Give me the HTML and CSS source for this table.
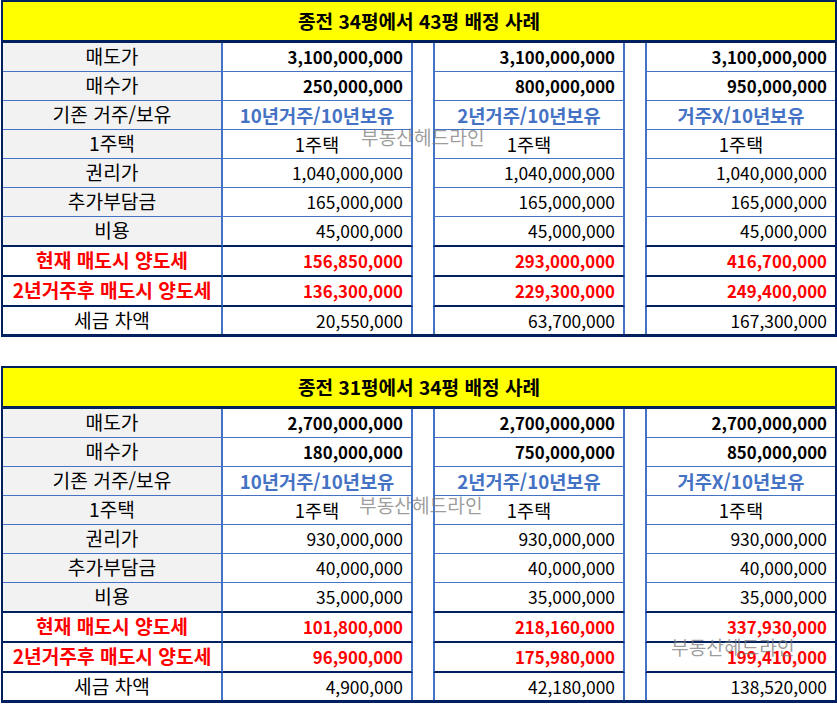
FILE: index.html
```html
<!DOCTYPE html>
<html lang="ko">
<head>
<meta charset="utf-8">
<title>배정 사례</title>
<link rel="stylesheet" href="styles.css">
</head>
<body>
<div class="page">
  <section class="sheet">
    <div class="title">종전 34평에서 43평 배정 사례</div>
    <div class="grid">
      <div class="gap gap-a"></div>
      <div class="gap gap-b"></div>

      <div class="lbl">매도가</div>
      <div class="val num c1 bold">3,100,000,000</div>
      <div class="val num c2 bold">3,100,000,000</div>
      <div class="val num c3 bold">3,100,000,000</div>

      <div class="lbl">매수가</div>
      <div class="val num c1 bold">250,000,000</div>
      <div class="val num c2 bold">800,000,000</div>
      <div class="val num c3 bold">950,000,000</div>

      <div class="lbl">기존 거주/보유</div>
      <div class="val mix c1 center blue bold">10년거주/10년보유</div>
      <div class="val mix c2 center blue bold">2년거주/10년보유</div>
      <div class="val mix c3 center blue bold">거주X/10년보유</div>

      <div class="lbl">1주택</div>
      <div class="val one c1 center">1주택</div>
      <div class="val one c2 center">1주택</div>
      <div class="val one c3 center">1주택</div>

      <div class="lbl">권리가</div>
      <div class="val num c1">1,040,000,000</div>
      <div class="val num c2">1,040,000,000</div>
      <div class="val num c3">1,040,000,000</div>

      <div class="lbl">추가부담금</div>
      <div class="val num c1">165,000,000</div>
      <div class="val num c2">165,000,000</div>
      <div class="val num c3">165,000,000</div>

      <div class="lbl dk">비용</div>
      <div class="val num c1 dk">45,000,000</div>
      <div class="val num c2 dk">45,000,000</div>
      <div class="val num c3 dk">45,000,000</div>

      <div class="lbl white red bold dk">현재 매도시 양도세</div>
      <div class="val num c1 red bold dk">156,850,000</div>
      <div class="val num c2 red bold dk">293,000,000</div>
      <div class="val num c3 red bold dk">416,700,000</div>

      <div class="lbl white red bold dk">2년거주후 매도시 양도세</div>
      <div class="val num c1 red bold dk">136,300,000</div>
      <div class="val num c2 red bold dk">229,300,000</div>
      <div class="val num c3 red bold dk">249,400,000</div>

      <div class="lbl white last">세금 차액</div>
      <div class="val num c1 last">20,550,000</div>
      <div class="val num c2 last">63,700,000</div>
      <div class="val num c3 last">167,300,000</div>
    </div>
  </section>

  <section class="sheet second">
    <div class="title">종전 31평에서 34평 배정 사례</div>
    <div class="grid">
      <div class="gap gap-a"></div>
      <div class="gap gap-b"></div>

      <div class="lbl">매도가</div>
      <div class="val num c1 bold">2,700,000,000</div>
      <div class="val num c2 bold">2,700,000,000</div>
      <div class="val num c3 bold">2,700,000,000</div>

      <div class="lbl">매수가</div>
      <div class="val num c1 bold">180,000,000</div>
      <div class="val num c2 bold">750,000,000</div>
      <div class="val num c3 bold">850,000,000</div>

      <div class="lbl">기존 거주/보유</div>
      <div class="val mix c1 center blue bold">10년거주/10년보유</div>
      <div class="val mix c2 center blue bold">2년거주/10년보유</div>
      <div class="val mix c3 center blue bold">거주X/10년보유</div>

      <div class="lbl">1주택</div>
      <div class="val one c1 center">1주택</div>
      <div class="val one c2 center">1주택</div>
      <div class="val one c3 center">1주택</div>

      <div class="lbl">권리가</div>
      <div class="val num c1">930,000,000</div>
      <div class="val num c2">930,000,000</div>
      <div class="val num c3">930,000,000</div>

      <div class="lbl">추가부담금</div>
      <div class="val num c1">40,000,000</div>
      <div class="val num c2">40,000,000</div>
      <div class="val num c3">40,000,000</div>

      <div class="lbl dk">비용</div>
      <div class="val num c1 dk">35,000,000</div>
      <div class="val num c2 dk">35,000,000</div>
      <div class="val num c3 dk">35,000,000</div>

      <div class="lbl white red bold dk">현재 매도시 양도세</div>
      <div class="val num c1 red bold dk">101,800,000</div>
      <div class="val num c2 red bold dk">218,160,000</div>
      <div class="val num c3 red bold dk">337,930,000</div>

      <div class="lbl white red bold dk">2년거주후 매도시 양도세</div>
      <div class="val num c1 red bold dk">96,900,000</div>
      <div class="val num c2 red bold dk">175,980,000</div>
      <div class="val num c3 red bold dk">199,410,000</div>

      <div class="lbl white last">세금 차액</div>
      <div class="val num c1 last">4,900,000</div>
      <div class="val num c2 last">42,180,000</div>
      <div class="val num c3 last">138,520,000</div>
    </div>
  </section>

  <span class="watermark wm1">부동산헤드라인</span>
  <span class="watermark wm2">부동산헤드라인</span>
  <span class="watermark wm3">부동산헤드라인</span>
</div>
</body>
</html>
```

FILE: styles.css
```css
html, body {
  margin: 0;
  padding: 0;
  background: #ffffff;
}

.page {
  position: relative;
  width: 837px;
  height: 704px;
  padding-left: 1px;
  box-sizing: border-box;
  font-family: "Noto Sans CJK KR", "Noto Sans", sans-serif;
  font-size: 19.2px;
  color: #000000;
}

.sheet {
  width: 836px;
  box-sizing: border-box;
  border-top: 2px solid #002060;
  border-left: 2px solid #002060;
  border-right: 2px solid #002060;
  border-bottom: 3px solid #002060;
}

.sheet.second {
  margin-top: 29px;
}

.title {
  height: 38px;
  background: #ffff00;
  border-bottom: 3px solid #002060;
  display: flex;
  align-items: center;
  justify-content: center;
  font-weight: bold;
  font-size: 19.1px;
}

.grid {
  display: grid;
  grid-template-columns: 220px 190px 20px 192px 20px 190px;
}

.gap {
  grid-row: 1 / span 10;
  background: #ffffff;
}
.gap-a { grid-column: 3; }
.gap-b { grid-column: 5; }

.lbl, .val {
  box-sizing: border-box;
  height: 29px;
  border-bottom: 1px solid #4472c4;
  display: flex;
  align-items: center;
  white-space: nowrap;
  line-height: 1;
}

.lbl {
  grid-column: 1;
  justify-content: center;
  background: #f2f2f2;
  border-right: 2px solid #4472c4;
}

.val {
  justify-content: flex-end;
  padding-right: 8px;
  background: #ffffff;
}

.num { font-size: 17.4px; }
.num.bold { font-size: 16.8px; }
.mix { font-size: 18.7px; }
.one { font-size: 18.5px; }

.c1 { grid-column: 2; border-right: 2px solid #4472c4; }
.c2 { grid-column: 4; border-left: 2px solid #4472c4; border-right: 2px solid #4472c4; }
.c3 { grid-column: 6; border-left: 2px solid #4472c4; }

.center {
  justify-content: center;
  padding-right: 0;
}

.bold { font-weight: bold; }
.blue { color: #4472c4; }
.red { color: #ff0000; }
.white { background: #ffffff; }

.dk {
  height: 30px;
  border-bottom: 2px solid #002060;
}

.last {
  height: 27px;
  border-bottom: none;
}

.watermark {
  position: absolute;
  font-size: 19.2px;
  line-height: 19px;
  color: rgba(120, 120, 120, 0.72);
  white-space: nowrap;
  pointer-events: none;
}

.wm1 { left: 361px; top: 128px; }
.wm2 { left: 359px; top: 496px; }
.wm3 { left: 671px; top: 638px; }
```
